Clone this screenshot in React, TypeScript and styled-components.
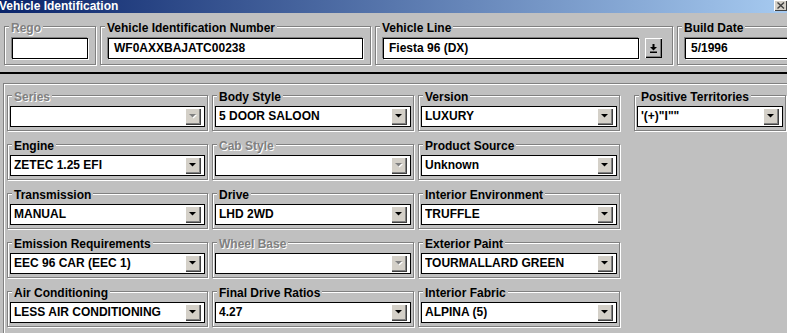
import styled, { createGlobalStyle } from "styled-components";

const GlobalStyle = createGlobalStyle`
  html, body {
    margin: 0;
    padding: 0;
    background: #c0c0c0;
  }
`;

interface Field {
  label: string;
  value?: string;
  disabled?: boolean;
}

const grid: Field[][] = [
  [
    { label: "Series", disabled: true },
    { label: "Body Style", value: "5 DOOR SALOON" },
    { label: "Version", value: "LUXURY" },
  ],
  [
    { label: "Engine", value: "ZETEC 1.25 EFI" },
    { label: "Cab Style", disabled: true },
    { label: "Product Source", value: "Unknown" },
  ],
  [
    { label: "Transmission", value: "MANUAL" },
    { label: "Drive", value: "LHD 2WD" },
    { label: "Interior Environment", value: "TRUFFLE" },
  ],
  [
    { label: "Emission Requirements", value: "EEC 96 CAR (EEC 1)" },
    { label: "Wheel Base", disabled: true },
    { label: "Exterior Paint", value: "TOURMALLARD GREEN" },
  ],
  [
    { label: "Air Conditioning", value: "LESS AIR CONDITIONING" },
    { label: "Final Drive Ratios", value: "4.27" },
    { label: "Interior Fabric", value: "ALPINA (5)" },
  ],
];

const Arrow = ({ disabled }: { disabled?: boolean }) => (
  <svg width="8" height="5" viewBox="0 0 8 5">
    {disabled && <polygon points="1,1 8,1 4.5,4.5" fill="#fff" />}
    <polygon points="0,0 7,0 3.5,3.5" fill={disabled ? "#808080" : "#000"} />
  </svg>
);

const ComboBox = ({ value, disabled }: { value?: string; disabled?: boolean }) => (
  <Combo>
    <ComboText>{value}</ComboText>
    <DropButton>
      <Arrow disabled={disabled} />
    </DropButton>
  </Combo>
);

const FieldGroup = ({ label, value, disabled }: Field) => (
  <Group>
    <Label $disabled={disabled}>{label}</Label>
    <GroupBody>
      <ComboBox value={value} disabled={disabled} />
    </GroupBody>
  </Group>
);

export default function App() {
  return (
    <>
      <GlobalStyle />
      <Window>
        <TitleBar>
          <TitleText>Vehicle Identification</TitleText>
          <CloseButton>
            <svg width="8" height="7" viewBox="0 0 8 7">
              <path d="M0.5 0.5 L7 6.5 M7 0.5 L0.5 6.5" stroke="#404040" strokeWidth="1.4" />
            </svg>
          </CloseButton>
        </TitleBar>

        <Header>
          <HeadGroup $w={92}>
            <Label $disabled>Rego</Label>
            <HeadBody>
              <TextBox />
            </HeadBody>
          </HeadGroup>
          <HeadGroup $w={271}>
            <Label>Vehicle Identification Number</Label>
            <HeadBody>
              <TextBox>WF0AXXBAJATC00238</TextBox>
            </HeadBody>
          </HeadGroup>
          <HeadGroup $w={298}>
            <Label>Vehicle Line</Label>
            <HeadBody $right={10}>
              <TextBox>Fiesta 96 (DX)</TextBox>
              <PickButton>
                <svg width="7" height="9" viewBox="0 0 7 9">
                  <rect x="2.5" y="0" width="2" height="3" fill="#000" />
                  <polygon points="0,3 7,3 3.5,6.5" fill="#000" />
                  <rect x="0" y="7.5" width="7" height="1.5" fill="#000" />
                </svg>
              </PickButton>
            </HeadBody>
          </HeadGroup>
          <HeadGroup $w={120}>
            <Label>Build Date</Label>
            <HeadBody>
              <TextBox>5/1996</TextBox>
            </HeadBody>
          </HeadGroup>
        </Header>

        <Separator />

        <Frame>
          <Grid>
            {grid.flat().map((f) => (
              <FieldGroup key={f.label} {...f} />
            ))}
          </Grid>
          <Side>
            <FieldGroup label="Positive Territories" value={`'(+)"I""`} />
          </Side>
        </Frame>
      </Window>
    </>
  );
}

const Window = styled.div`
  width: 787px;
  height: 333px;
  overflow: hidden;
  background: #c0c0c0;
  display: flex;
  flex-direction: column;
  font-family: "Liberation Sans", Arial, sans-serif;
  font-size: 12px;
  font-weight: bold;
  color: #000;
`;

const TitleBar = styled.div`
  flex: none;
  height: 13px;
  display: flex;
  justify-content: space-between;
  align-items: flex-start;
  background: linear-gradient(to right, #0a246a, #a6caf0);
`;

const TitleText = styled.div`
  color: #fff;
  line-height: 13px;
  margin-left: -1px;
  white-space: nowrap;
`;

const CloseButton = styled.div`
  width: 13px;
  height: 11px;
  box-sizing: border-box;
  background: #d4d0c8;
  box-shadow: inset 1px 1px 0 #fff, inset -1px -1px 0 #404040;
  display: flex;
  align-items: center;
  justify-content: center;
`;

const Header = styled.div`
  flex: none;
  display: flex;
  gap: 4px;
  padding: 9px 0 0 4px;
`;

const Group = styled.div`
  margin-top: 4px;
  border: 1px solid #808080;
  box-shadow: inset 1px 1px 0 #fff, 1px 1px 0 #fff;
`;

const HeadGroup = styled(Group)<{ $w: number }>`
  flex: none;
  width: ${({ $w }) => $w}px;
  box-sizing: border-box;
`;

const Label = styled.div<{ $disabled?: boolean }>`
  width: fit-content;
  margin: -5px 0 0 4px;
  padding: 0 2px;
  line-height: 13px;
  white-space: nowrap;
  background: #c0c0c0;
  color: ${({ $disabled }) => ($disabled ? "#808080" : "#000")};
  text-shadow: ${({ $disabled }) => ($disabled ? "1px 1px 0 #fff" : "none")};
`;

const HeadBody = styled.div<{ $right?: number }>`
  display: flex;
  align-items: flex-start;
  gap: 6px;
  padding: 3px ${({ $right }) => $right ?? 7}px 5px 7px;
`;

const TextBox = styled.div`
  flex: 1;
  height: 21px;
  box-sizing: border-box;
  border: 1px solid #000;
  box-shadow: -1px -1px 0 #808080, 1px 1px 0 #fff;
  background: #fff;
  padding-left: 5px;
  line-height: 19px;
  white-space: nowrap;
  overflow: hidden;
`;

const PickButton = styled.div`
  flex: none;
  width: 17px;
  height: 20px;
  box-sizing: border-box;
  background: #c0c0c0;
  box-shadow: inset 1px 1px 0 #fff, inset -1px -1px 0 #000, inset -2px -2px 0 #808080;
  display: flex;
  align-items: center;
  justify-content: center;
`;

const Separator = styled.div`
  flex: none;
  height: 2px;
  margin-top: 7px;
  background: #000;
`;

const Frame = styled.div`
  flex: none;
  width: 820px;
  height: 260px;
  margin: 9px 0 0 3px;
  padding: 7px 0 0 3px;
  border: 1px solid #808080;
  box-shadow: inset 1px 1px 0 #fff;
  display: flex;
  align-items: flex-start;
  gap: 14px;
`;

const Grid = styled.div`
  display: grid;
  grid-template-columns: 201px 202px 202px;
  column-gap: 4px;
  row-gap: 9px;
`;

const Side = styled.div`
  width: 152px;
`;

const GroupBody = styled.div`
  padding: 2px 2px 3px;
`;

const Combo = styled.div`
  height: 21px;
  box-sizing: border-box;
  border: 1px solid #000;
  background: #fff;
  display: flex;
  align-items: center;
  padding: 0 3px 0 3px;
`;

const ComboText = styled.span`
  flex: 1;
  line-height: 19px;
  white-space: nowrap;
  overflow: hidden;
`;

const DropButton = styled.div`
  flex: none;
  width: 16px;
  height: 17px;
  box-sizing: border-box;
  background: #d4d0c8;
  box-shadow: inset 1px 1px 0 #fff, inset -1px -1px 0 #404040, inset -2px -2px 0 #808080;
  display: flex;
  align-items: center;
  justify-content: center;
`;
